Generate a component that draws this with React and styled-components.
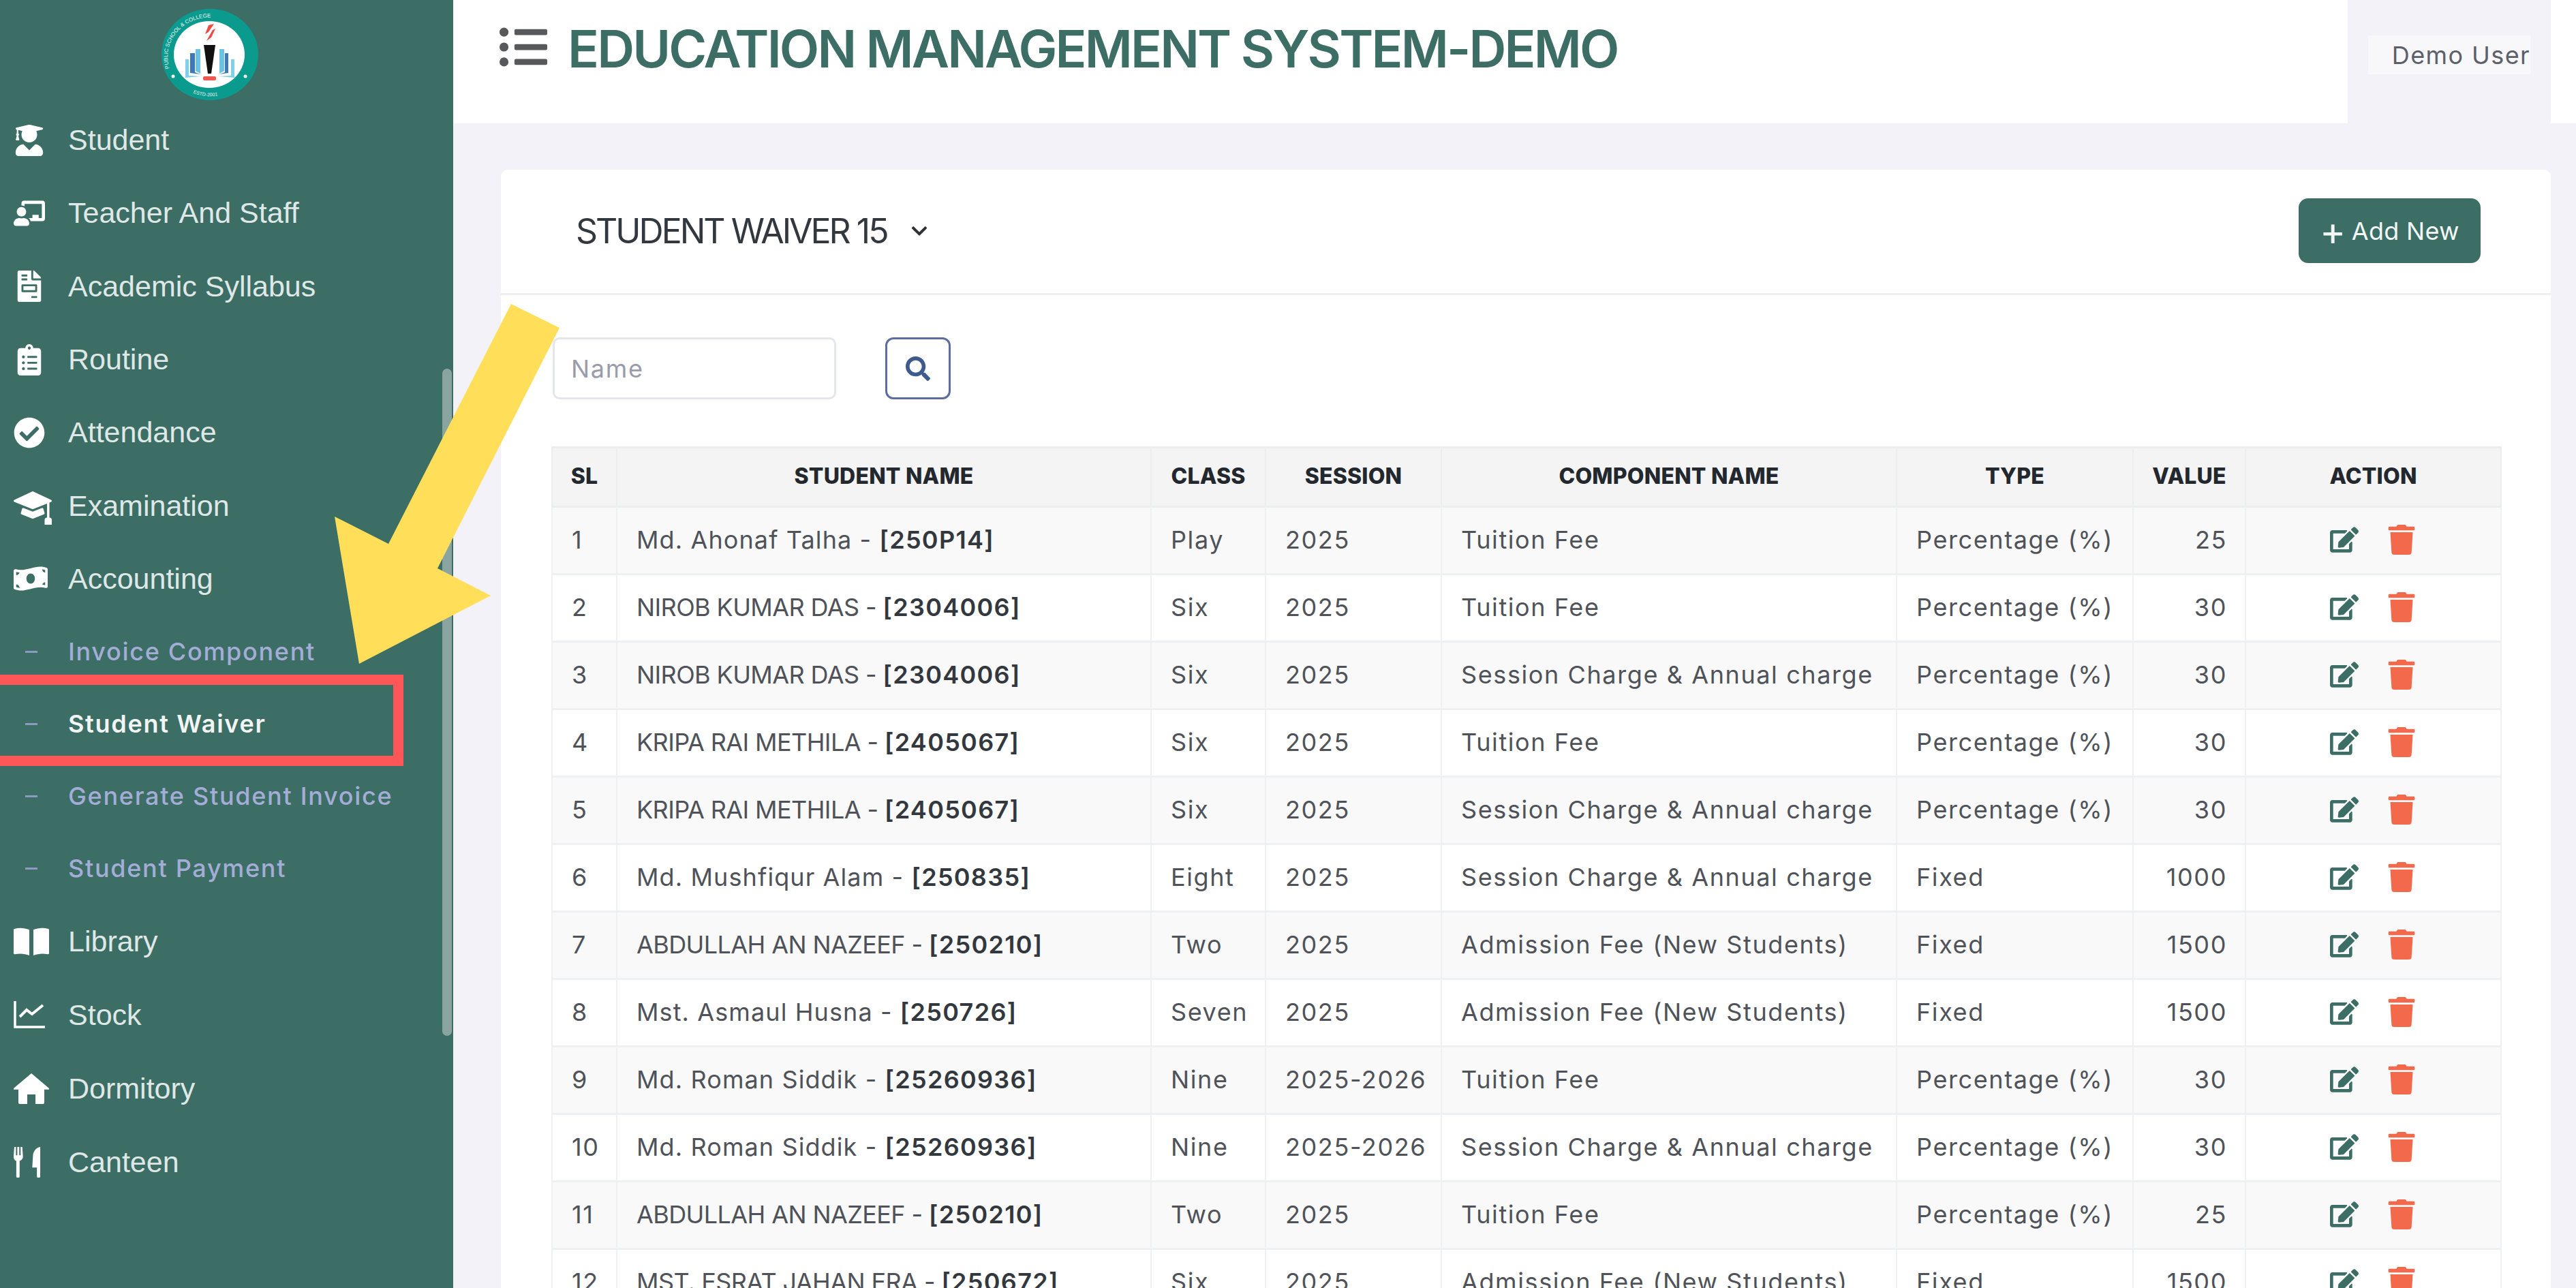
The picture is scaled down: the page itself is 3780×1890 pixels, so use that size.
import React from "react";
import styled, { createGlobalStyle } from "styled-components";
import {
  FaUserGraduate,
  FaChalkboardTeacher,
  FaFileInvoice,
  FaClipboardList,
  FaCheckCircle,
  FaMoneyBillWave,
  FaListUl,
  FaSearch,
  FaEdit,
  FaTrash,
  FaChevronDown,
} from "react-icons/fa";
import { BsMortarboardFill } from "react-icons/bs";

const green = "#3c6e65";
const pageBg = "#f2f2f8";
const bodyFont = `Inter, "Noto Sans", sans-serif`;

const GlobalStyle = createGlobalStyle`
  html, body {
    margin: 0;
    padding: 0;
    background: ${pageBg};
  }
  * {
    box-sizing: border-box;
  }
`;

const Page = styled.div`
  position: relative;
  display: flex;
  width: 3780px;
  height: 1890px;
  overflow: hidden;
  font-family: ${bodyFont};
`;

const Sidebar = styled.aside`
  position: relative;
  flex: 0 0 665px;
  background: ${green};
  display: flex;
  flex-direction: column;
`;

const LogoWrap = styled.div`
  height: 152px;
  padding-left: 220px;
`;

const ScrollThumb = styled.div`
  position: absolute;
  left: 649px;
  top: 541px;
  width: 14px;
  height: 979px;
  border-radius: 7px;
  background: #8aa5a0;
`;

const NavRow = styled.div`
  height: ${(props) => (props.$tall ? "108px" : "107.3px")};
  padding-left: 20px;
  display: flex;
  align-items: center;
  color: #dfe8e6;
  font-family: "Liberation Sans", Arial, sans-serif;
  font-size: 43px;
  svg {
    color: #fff;
    flex: none;
  }
`;

const NavIcon = styled.span`
  flex: 0 0 80px;
  display: flex;
  align-items: center;
`;

const SubRow = styled.div`
  height: 106px;
  padding-left: 37px;
  display: flex;
  align-items: center;
  font-size: 36px;
  font-weight: ${(props) => (props.$active ? 600 : 500)};
  letter-spacing: 1.7px;
  color: ${(props) => (props.$active ? "#f2f5f4" : "#a3add6")};
`;

const SubDash = styled.span`
  flex: 0 0 18px;
  height: 3px;
  margin-right: 45px;
  background: #8d9ac0;
`;

const Content = styled.div`
  flex: 1;
  min-width: 0;
  display: flex;
  flex-direction: column;
`;

const TopRow = styled.header`
  flex: 0 0 181px;
  display: flex;
  background: #fff;
`;

const TitleBar = styled.div`
  flex: 1;
  display: flex;
  align-items: flex-start;
  padding: 33px 0 0 68px;
  gap: 30px;
  svg {
    color: #58595b;
    margin-top: 1px;
  }
`;

const AppTitle = styled.h1`
  margin: 0;
  font-size: 76px;
  line-height: 76px;
  font-weight: 600;
  letter-spacing: -2.85px;
  color: ${green};
  white-space: nowrap;
`;

const UserZone = styled.div`
  flex: 0 0 298px;
  margin-right: 37px;
  background: ${pageBg};
  padding: 52px 30px 0;
`;

const UserChip = styled.div`
  height: 57px;
  background: #f8f8fa;
  display: flex;
  align-items: center;
  justify-content: flex-end;
  font-size: 36px;
  letter-spacing: 1.4px;
  color: #5b606b;
  white-space: nowrap;
`;

const Main = styled.main`
  flex: 1;
  min-height: 0;
  padding: 68px 37px 0 70px;
`;

const Card = styled.section`
  height: 100%;
  background: #fff;
  border-radius: 10px 10px 0 0;
`;

const CardHead = styled.div`
  height: 184px;
  padding: 0 103px 2px 110px;
  display: flex;
  align-items: center;
  justify-content: space-between;
  border-bottom: 3px solid #eeeff2;
`;

const CardTitle = styled.div`
  display: flex;
  align-items: center;
  gap: 34px;
  font-size: 50px;
  letter-spacing: -3px;
  color: #33383f;
  white-space: nowrap;
  svg {
    color: #2d3238;
  }
`;

const AddButton = styled.button`
  width: 267px;
  height: 95px;
  border: none;
  border-radius: 14px;
  background: ${green};
  color: #f2f6f5;
  font-family: ${bodyFont};
  font-size: 36px;
  letter-spacing: 0.3px;
  display: flex;
  align-items: center;
  justify-content: center;
  gap: 8px;
  white-space: nowrap;
`;

const PlusMark = styled.span`
  font-size: 58px;
  line-height: 50px;
  font-weight: 400;
`;

const FilterRow = styled.div`
  display: flex;
  gap: 72px;
  padding: 62px 0 0 76px;
`;

const NameInput = styled.input`
  width: 416px;
  height: 91px;
  padding: 0 24px;
  border: 3px solid #e4e6eb;
  border-radius: 10px;
  font-family: ${bodyFont};
  font-size: 36px;
  letter-spacing: 1.7px;
  background: #fff;
  &::placeholder {
    color: #9a9cab;
    opacity: 1;
  }
`;

const SearchButton = styled.button`
  width: 96px;
  height: 91px;
  border: 3px solid #5e6c9f;
  border-radius: 12px;
  background: #fff;
  display: flex;
  align-items: center;
  justify-content: center;
  color: #3e5a8f;
`;

const Table = styled.table`
  width: 2860px;
  margin: 69px 0 0 74px;
  border-collapse: collapse;
  table-layout: fixed;
  font-size: 36px;
  letter-spacing: 1.6px;
  color: #4f5359;
`;

const Th = styled.th`
  height: 87px;
  padding: 0 0 3px;
  background: #f4f4f4;
  border: 3px solid #eceded;
  border-width: 3px 2px;
  font-size: 32px;
  font-weight: 800;
  letter-spacing: 0.2px;
  text-align: center;
  color: #23282f;
  white-space: nowrap;
`;

const Row = styled.tr`
  background: ${(props) => (props.$striped ? "#f9f9f9" : "#fff")};
`;

const Td = styled.td`
  height: 99px;
  padding: 0 ${(props) => (props.$right ? "26px" : "28px")} 3px 28px;
  border: 3px solid #eef0f2;
  border-width: 3px 2px;
  white-space: nowrap;
  text-align: ${(props) => (props.$right ? "right" : "left")};
`;

// names in capitals run narrower than the mixed-case ones in the reference
const StudentName = styled.span`
  letter-spacing: ${(props) => (props.$caps ? "-0.6px" : "1.1px")};
`;

const StudentId = styled.b`
  font-weight: 600;
  letter-spacing: 1.3px;
  color: #33383f;
`;

const ActionGroup = styled.div`
  display: flex;
  justify-content: center;
  align-items: center;
  gap: 41px;
`;

const EditIcon = styled(FaEdit)`
  color: ${green};
`;

const TrashIcon = styled(FaTrash)`
  color: #f26a4b;
`;

const RedBox = styled.div`
  position: absolute;
  left: -15px;
  top: 990px;
  width: 607px;
  height: 134px;
  border: 15px solid #ff5757;
`;

const ArrowShape = styled.svg`
  position: absolute;
  left: 491px;
  top: 446px;
`;

const cols = [95, 784, 168, 258, 668, 347, 165, 375];
const heads = ["SL", "STUDENT NAME", "CLASS", "SESSION", "COMPONENT NAME", "TYPE", "VALUE", "ACTION"];

const charge = "Session Charge & Annual charge";
const admission = "Admission Fee (New Students)";
const tuition = "Tuition Fee";
const pct = "Percentage (%)";

const rows = [
  ["Md. Ahonaf Talha", "250P14", "Play", "2025", tuition, pct, 25],
  ["NIROB KUMAR DAS", "2304006", "Six", "2025", tuition, pct, 30],
  ["NIROB KUMAR DAS", "2304006", "Six", "2025", charge, pct, 30],
  ["KRIPA RAI METHILA", "2405067", "Six", "2025", tuition, pct, 30],
  ["KRIPA RAI METHILA", "2405067", "Six", "2025", charge, pct, 30],
  ["Md. Mushfiqur Alam", "250835", "Eight", "2025", charge, "Fixed", 1000],
  ["ABDULLAH AN NAZEEF", "250210", "Two", "2025", admission, "Fixed", 1500],
  ["Mst. Asmaul Husna", "250726", "Seven", "2025", admission, "Fixed", 1500],
  ["Md. Roman Siddik", "25260936", "Nine", "2025-2026", tuition, pct, 30],
  ["Md. Roman Siddik", "25260936", "Nine", "2025-2026", charge, pct, 30],
  ["ABDULLAH AN NAZEEF", "250210", "Two", "2025", tuition, pct, 25],
  ["MST. ESRAT JAHAN ERA", "250672", "Six", "2025", admission, "Fixed", 1500],
];

// the reference's library, stock, home and canteen glyphs aren't in the icon packs
function BookGlyph() {
  return (
    <svg width="52" height="41" viewBox="0 0 52 50" preserveAspectRatio="none" fill="currentColor">
      <path d="M2 2c7-2 15-1 21 2v46c-6-3-14-4-21-2a2 2 0 0 1-2-2V4a2 2 0 0 1 2-2z" />
      <path d="M50 2c-7-2-15-1-21 2v46c6-3 14-4 21-2a2 2 0 0 0 2-2V4a2 2 0 0 0-2-2z" />
    </svg>
  );
}

function StockGlyph() {
  return (
    <svg width="46" height="40" viewBox="0 0 46 40" fill="none" stroke="currentColor" strokeWidth="3.5">
      <path d="M2 0v38h44" />
      <path d="M9 23l10-10 8 6 16-13" strokeWidth="4" />
    </svg>
  );
}

function HomeGlyph() {
  return (
    <svg width="52" height="45" viewBox="0 0 52 55" preserveAspectRatio="none" fill="currentColor">
      <path d="M26 0l26 27a1 1 0 0 1-1 2h-6v24a2 2 0 0 1-2 2H32V38H20v17H9a2 2 0 0 1-2-2V29H1a1 1 0 0 1-1-2z" />
    </svg>
  );
}

function CanteenGlyph() {
  return (
    <svg width="41" height="45" viewBox="0 0 42 55" preserveAspectRatio="none" fill="currentColor">
      <path d="M1 0h2.500v15h2V0h3v15h2V0h2.500l1 17c0 5-3 7-5 8v28a2.500 2.500 0 0 1-5 0V25c-2-1-4-3-4-8z" />
      <path d="M40 0v53a2.500 2.500 0 0 1-5 0V37h-7l1-20c0-9 5-16 11-17z" />
    </svg>
  );
}

const topNav = [
  [<FaUserGraduate size={46} />, "Student"],
  [<FaChalkboardTeacher size={46} />, "Teacher And Staff"],
  [<FaFileInvoice size={46} />, "Academic Syllabus"],
  [<FaClipboardList size={46} />, "Routine"],
  [<FaCheckCircle size={46} />, "Attendance"],
  [<BsMortarboardFill size={56} />, "Examination"],
  [<FaMoneyBillWave size={50} />, "Accounting"],
];

const subNav = ["Invoice Component", "Student Waiver", "Generate Student Invoice", "Student Payment"];

const bottomNav = [
  [<BookGlyph />, "Library"],
  [<StockGlyph />, "Stock"],
  [<HomeGlyph />, "Dormitory"],
  [<CanteenGlyph />, "Canteen"],
];

function Logo() {
  return (
    <svg width="180" height="152" viewBox="0 0 180 152">
      <defs>
        <path id="ringTop" d="M 30 104 A 62 58 0 1 1 146 104" />
        <path id="ringBottom" d="M 58 134 A 62 58 0 0 0 118 134" />
      </defs>
      <ellipse cx="88" cy="80" rx="71" ry="67" fill="#0b9a8e" />
      <ellipse cx="87" cy="80" rx="52" ry="49" fill="#fff" />
      <text fontSize="8" fill="#e8f5f3" fontFamily="Liberation Sans, sans-serif">
        <textPath href="#ringTop" startOffset="4">PUBLIC SCHOOL &amp; COLLEGE</textPath>
      </text>
      <text fontSize="7" fill="#e8f5f3" fontFamily="Liberation Sans, sans-serif">
        <textPath href="#ringBottom" startOffset="6">ESTD-2001</textPath>
      </text>
      <path d="M86 37l8-2-8 12-5 3zM92 44l4-2-6 13-7 5z" fill="#ea4c45" />
      <path d="M79 66h17l-6 42h-5z" fill="#111" />
      <rect x="78" y="112" width="19" height="6" rx="2" fill="#ee5a50" />
      <path d="M52 87h5v24l18 1-23 2z" fill="#7fd0ec" />
      <path d="M59 78h7v28l8 3-15-2z" fill="#3f78b8" />
      <path d="M67 72h7v36l-7-4z" fill="#6bc4e6" />
      <path d="M124 87h-5v24l-18 1 23 2z" fill="#7fd0ec" />
      <path d="M115 78h-5v28l-8 3 13-2z" fill="#3f78b8" />
      <path d="M109 72h-7v36l7-4z" fill="#6bc4e6" />
      <circle cx="34" cy="112" r="2.5" fill="#fff" />
      <circle cx="140" cy="112" r="2.5" fill="#fff" />
    </svg>
  );
}

function NavItem({ icon, label, tall }) {
  return (
    <NavRow $tall={tall}>
      <NavIcon>{icon}</NavIcon>
      {label}
    </NavRow>
  );
}

export default function App() {
  return (
    <Page>
      <GlobalStyle />
      <Sidebar>
        <LogoWrap>
          <Logo />
        </LogoWrap>
        {topNav.map(([icon, label]) => (
          <NavItem key={label} icon={icon} label={label} />
        ))}
        {subNav.map((label) => (
          <SubRow key={label} $active={label === "Student Waiver"}>
            <SubDash />
            {label}
          </SubRow>
        ))}
        {bottomNav.map(([icon, label]) => (
          <NavItem key={label} icon={icon} label={label} tall />
        ))}
        <ScrollThumb />
      </Sidebar>

      <Content>
        <TopRow>
          <TitleBar>
            <FaListUl size={70} />
            <AppTitle>EDUCATION MANAGEMENT SYSTEM-DEMO</AppTitle>
          </TitleBar>
          <UserZone>
            <UserChip>Demo User</UserChip>
          </UserZone>
        </TopRow>

        <Main>
          <Card>
            <CardHead>
              <CardTitle>
                STUDENT WAIVER 15
                <FaChevronDown size={26} />
              </CardTitle>
              <AddButton>
                <PlusMark>+</PlusMark>
                Add New
              </AddButton>
            </CardHead>

            <FilterRow>
              <NameInput placeholder="Name" />
              <SearchButton>
                <FaSearch size={36} />
              </SearchButton>
            </FilterRow>

            <Table>
              <colgroup>
                {cols.map((w, i) => (
                  <col key={i} width={w} />
                ))}
              </colgroup>
              <thead>
                <tr>
                  {heads.map((h) => (
                    <Th key={h}>{h}</Th>
                  ))}
                </tr>
              </thead>
              <tbody>
                {rows.map((r, i) => (
                  <Row key={i} $striped={i % 2 === 0}>
                    <Td>{i + 1}</Td>
                    <Td>
                      <StudentName $caps={r[0] === r[0].toUpperCase()}>{r[0]} - </StudentName>
                      <StudentId>[{r[1]}]</StudentId>
                    </Td>
                    <Td>{r[2]}</Td>
                    <Td>{r[3]}</Td>
                    <Td>{r[4]}</Td>
                    <Td>{r[5]}</Td>
                    <Td $right>{r[6]}</Td>
                    <Td>
                      <ActionGroup>
                        <EditIcon size={42} />
                        <TrashIcon size={44} />
                      </ActionGroup>
                    </Td>
                  </Row>
                ))}
              </tbody>
            </Table>
          </Card>
        </Main>
      </Content>

      <RedBox />
      <ArrowShape width="330" height="528" viewBox="0 0 330 528">
        <polygon points="259,0 330,35 151,388 229,428 36,528 0,312 79,352" fill="#ffde59" />
      </ArrowShape>
    </Page>
  );
}
